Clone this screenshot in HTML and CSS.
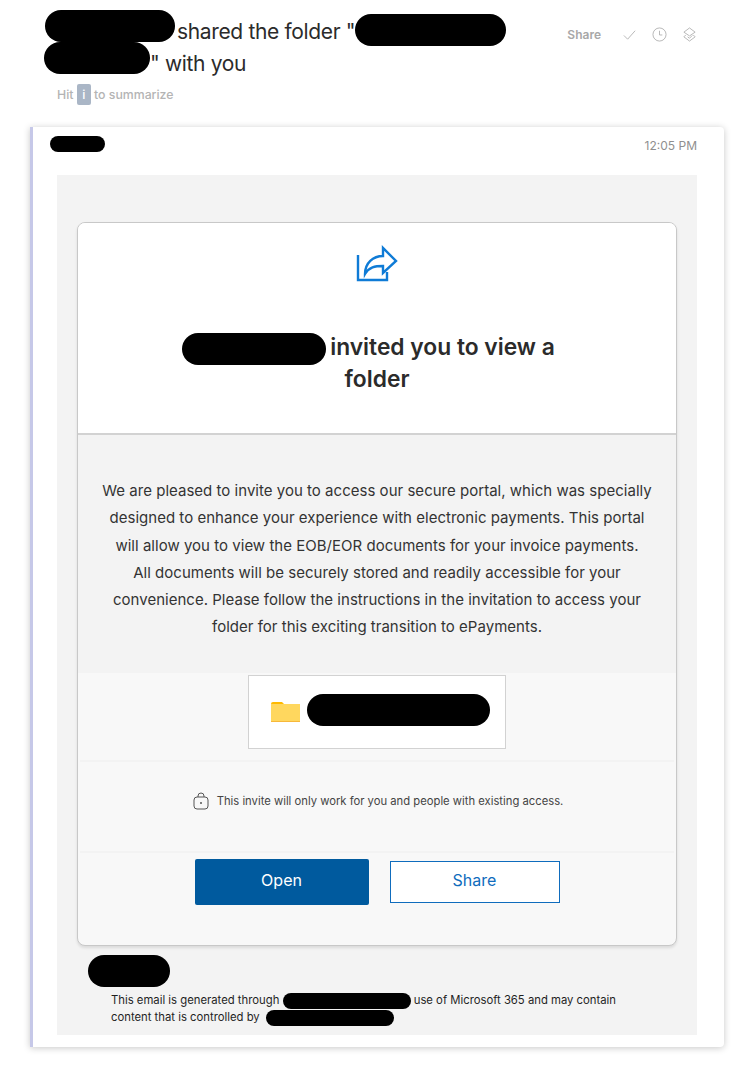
FILE: index.html
```html
<!DOCTYPE html>
<html lang="en">
<head>
    <meta charset="UTF-8">
    <meta name="viewport" content="width=device-width, initial-scale=1.0">
    <title>Shared folder</title>
    <link rel="stylesheet" href="styles.css">
</head>
<body>
    <!-- Thread header -->
    <div class="thread-head">
        <div class="thread-title">
            <h1><span class="blob blob-sender"></span>shared the folder "<span class="blob blob-folder"></span> <span class="blob blob-folder2"></span>" with you</h1>
            <div class="hint">Hit <span class="key">i</span> to summarize</div>
        </div>
        <div class="thread-actions">
            <span class="action-label">Share</span>
            <svg class="action-icon" viewBox="0 0 16 16"><path d="M2 9l4 4 8-9"/></svg>
            <svg class="action-icon" viewBox="0 0 16 16"><circle cx="8" cy="8" r="7"/><path d="M8 4v4.500h3"/></svg>
            <svg class="action-icon" viewBox="0 0 16 16"><path d="M8 1l6 4.500-6 4-6-4zM4 8.500l-2 2 6 4.500 6-4.500-2-2M6 10.500l2 1.500 3-3"/></svg>
        </div>
    </div>

    <!-- Message -->
    <div class="message">
        <div class="message-head">
            <span class="blob blob-from"></span>
            <span class="message-time">12:05 PM</span>
        </div>

        <div class="mail">
            <div class="card">
                <div class="card-top">
                    <svg class="share-icon" viewBox="0 0 42 38">
                        <path d="M2 10v25h29v-8"/>
                        <path d="M9 29c0-11 8-18 18-18V3l13 13-13 12v-7c-8 0-14 1-18 8z"/>
                    </svg>
                    <h2><span class="blob blob-inviter"></span>invited you to view a<span class="title-gap"></span><br>folder</h2>
                </div>

                <p class="card-text">We are pleased to invite you to access our secure portal, which was specially designed to enhance your experience with electronic payments. This portal will allow you to view the EOB/EOR documents for your invoice payments.<br>All documents will be securely stored and readily accessible for your convenience. Please follow the instructions in the invitation to access your folder for this exciting transition to ePayments.</p>

                <div class="section section-folder">
                    <div class="folder-box">
                        <svg class="folder-icon" viewBox="0 0 30 22">
                            <path class="folder-tab" d="M0 3a2 2 0 0 1 2-2h9l3 3v3H0z"/>
                            <rect class="folder-body" x="0" y="3" width="29" height="18"/>
                            <rect class="folder-edge" x="0" y="20" width="29" height="1"/>
                        </svg>
                        <span class="blob blob-file"></span>
                    </div>
                </div>

                <div class="section section-note">
                    <svg class="lock-icon" viewBox="0 0 16 18">
                        <path d="M5 5V4a3 3 0 0 1 6 0v1"/>
                        <rect x="1" y="5" width="14" height="12" rx="3"/>
                        <circle class="lock-dot" cx="8" cy="11" r="1"/>
                    </svg>
                    <span>This invite will only work for you and people with existing access.</span>
                </div>

                <div class="section section-buttons">
                    <a href="#" class="btn btn-open">Open</a>
                    <a href="#" class="btn btn-share">Share</a>
                </div>
            </div>

            <div class="mail-foot">
                <span class="blob blob-org"></span>
                <p>This email is generated through <span class="blob blob-small"></span> use of Microsoft 365 and may contain<br>content that is controlled by <span class="blob blob-small blob-small-last"></span></p>
            </div>
        </div>
    </div>
</body>
</html>
```

FILE: styles.css
```css
body {
    margin: 0;
    background: white;
    color: #2b2b2b;
    font-family: Inter, "Liberation Sans", sans-serif;
}

/* Redacted bits, they sit over the text so they get nudged */
.blob {
    display: inline-block;
    position: relative;
    background: black;
    border-radius: 16px;
    vertical-align: middle;
}

.blob-sender,
.blob-folder,
.blob-folder2,
.blob-inviter {
    height: 32px;
    margin-top: -6px;
    margin-bottom: -6px;
}

.blob-sender { width: 130px; top: -7px; margin-right: 2px; }
.blob-folder { width: 151px; top: -3px; }
.blob-folder2 { width: 106px; top: -7px; margin-left: -1px; }
.blob-from { width: 55px; height: 16px; border-radius: 8px; margin-left: -7px; }
.blob-inviter { width: 144px; margin-right: 4px; }
.blob-file { width: 183px; height: 32px; top: -2px; }
.blob-org { display: block; width: 82px; height: 32px; }
.blob-small { width: 128px; height: 16px; border-radius: 8px; }
.blob-small-last { margin-left: 3px; }

/* Thread header */
.thread-head {
    display: flex;
    justify-content: space-between;
    padding: 16px 54px 0 45px;
    height: 112px;
    box-sizing: border-box;
}

.thread-title {
    width: 480px;
}

h1 {
    margin: 0;
    font-size: 21px;
    font-weight: 400;
    line-height: 32px;
    letter-spacing: -0.35px;
}

.hint {
    margin: 4px 0 0 12px;
    font-size: 12.300px;
    font-weight: 500;
    line-height: 21px;
    color: #b4b4b4;
}

.key {
    display: inline-block;
    width: 14px;
    background: #aab6c6;
    color: white;
    border-radius: 2px;
    text-align: center;
}

.thread-actions {
    display: flex;
    align-items: center;
    gap: 15px;
    height: 36px;
}

.action-label {
    font-size: 12px;
    font-weight: 600;
    color: #a8a8a8;
    margin-right: 6px;
}

.action-icon {
    width: 15px;
    height: 15px;
    fill: none;
    stroke: #b4b4b4;
    stroke-width: 1;
}

/* Message */
.message {
    margin: 15px 27px 21px 30px;
    height: 920px;
    box-sizing: border-box;
    padding: 0 27px 12px 24px;
    border-left: 3px solid #c6c8e8;
    border-radius: 0 4px 4px 0;
    box-shadow: 0 1px 7px rgba(0, 0, 0, 0.22);
}

.message-head {
    display: flex;
    justify-content: space-between;
    align-items: flex-start;
    height: 48px;
    padding-top: 9px;
    box-sizing: border-box;
}

.message-time {
    font-size: 12px;
    line-height: 20px;
    color: #8f8f8f;
}

.mail {
    height: 860px;
    background: #f3f3f3;
    padding: 47px 20px 0;
    box-sizing: border-box;
}

.card {
    height: 724px;
    box-sizing: border-box;
    background: #f8f8f8;
    border: 1px solid #c8c8c8;
    border-radius: 8px;
    box-shadow: 0 2px 3px rgba(0, 0, 0, 0.1);
    overflow: hidden;
}

.card-top {
    height: 212px;
    box-sizing: border-box;
    padding-top: 22px;
    background: white;
    border-bottom: 2px solid #d2d2d2;
    text-align: center;
}

.share-icon {
    display: block;
    width: 42px;
    height: 38px;
    margin: 0 auto;
    fill: none;
    stroke: #0f7bd6;
    stroke-width: 2.400;
}

h2 {
    width: 440px;
    margin: 48px auto 0;
    font-size: 22.800px;
    font-weight: 600;
    line-height: 32px;
    color: #2b2b2b;
}

.title-gap {
    display: inline-block;
    width: 17px;
}

.card-text {
    margin: 0;
    height: 238px;
    box-sizing: border-box;
    padding: 42px 20px 0;
    background: #f3f3f3;
    font-size: 15px;
    letter-spacing: 0.02px;
    line-height: 27.300px;
    text-align: center;
    color: #333;
}

.section {
    margin: 0 2px;
    display: flex;
    justify-content: center;
    align-items: center;
}

.section-folder {
    height: 89px;
    align-items: flex-start;
    padding-top: 2px;
    box-sizing: border-box;
    border-bottom: 2px solid #f3f3f3;
}

.folder-box {
    width: 258px;
    height: 74px;
    box-sizing: border-box;
    padding-left: 22px;
    display: flex;
    align-items: center;
    gap: 6px;
    background: white;
    border: 1px solid #d2d2d2;
}

.folder-icon {
    width: 30px;
    height: 22px;
}

.folder-tab { fill: #ffb900; }
.folder-body { fill: #ffd75e; }
.folder-edge { fill: #f7b83a; }

.section-note {
    height: 91px;
    box-sizing: border-box;
    gap: 8px;
    border-bottom: 2px solid #f3f3f3;
    font-size: 11.250px;
    color: #444;
    padding: 0 0 11px 2px;
}

.lock-icon {
    width: 16px;
    height: 18px;
    fill: none;
    stroke: #555;
    stroke-width: 1;
}

.lock-dot {
    fill: #555;
    stroke: none;
}

.section-buttons {
    gap: 21px;
    padding-top: 6px;
    align-items: flex-start;
}

.btn {
    display: flex;
    align-items: center;
    justify-content: center;
    box-sizing: border-box;
    font-size: 16px;
    text-decoration: none;
}

.btn-open {
    width: 174px;
    height: 46px;
    background: #005a9e;
    border-radius: 2px;
    color: white;
    padding-bottom: 4px;
}

.btn-share {
    width: 170px;
    height: 42px;
    margin-top: 2px;
    background: white;
    border: 1px solid #0f6cbd;
    color: #0f6cbd;
    padding-bottom: 5px;
}

.mail-foot {
    padding: 9px 0 0 11px;
}

.mail-foot p {
    margin: 5px 0 0 23px;
    font-size: 11.300px;
    line-height: 16px;
    color: #1f1f1f;
}
```
